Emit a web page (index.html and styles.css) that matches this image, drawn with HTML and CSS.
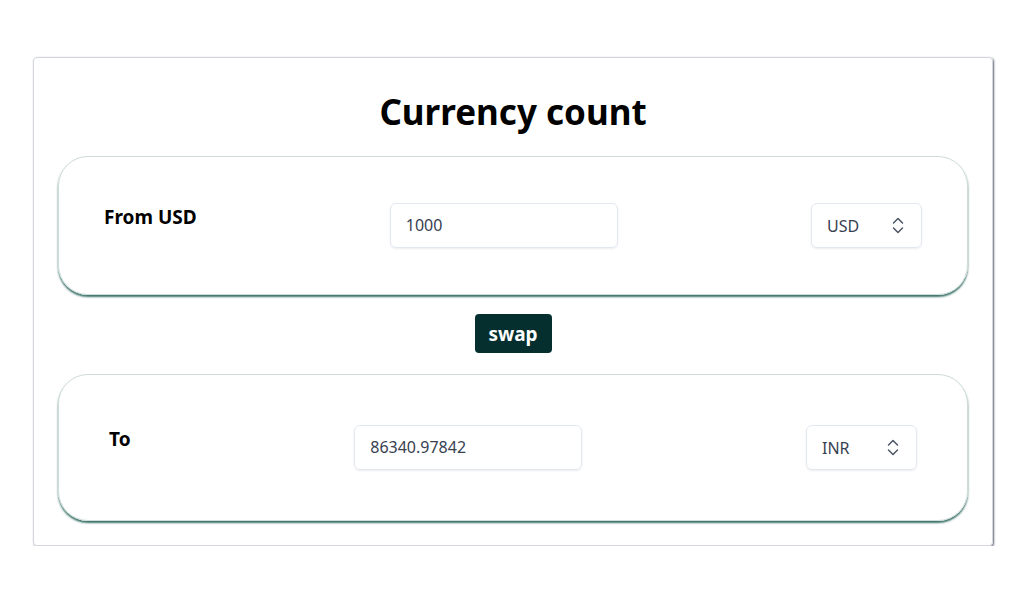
FILE: index.html
```html
<!DOCTYPE html>
<html>
<head>
<meta charset="utf-8">
<link rel="stylesheet" href="styles.css">
</head>
<body>
<div class="page">
  <div class="card">
    <h1 class="title">Currency count</h1>
    <div class="box box-from">
      <label class="label">From USD</label>
      <div class="input">1000</div>
      <div class="select">
        <span>USD</span>
        <svg class="chev" width="12" height="17" viewBox="0 0 12 17"><path d="M1.5 6 L6 1.5 L10.5 6 M1.5 11 L6 15.5 L10.5 11" fill="none" stroke="#4b5563" stroke-width="1.5" stroke-linecap="round" stroke-linejoin="round"/></svg>
      </div>
    </div>
    <div class="swap-row"><button class="swap">swap</button></div>
    <div class="box box-to">
      <label class="label">To</label>
      <div class="input">86340.97842</div>
      <div class="select">
        <span>INR</span>
        <svg class="chev" width="12" height="17" viewBox="0 0 12 17"><path d="M1.5 6 L6 1.5 L10.5 6 M1.5 11 L6 15.5 L10.5 11" fill="none" stroke="#4b5563" stroke-width="1.5" stroke-linecap="round" stroke-linejoin="round"/></svg>
      </div>
    </div>
  </div>
</div>
</body>
</html>
```
FILE: styles.css
```css
* { box-sizing: border-box; }
body {
  margin: 0;
  background: #fff;
  font-family: "Noto Sans", "Open Sans", sans-serif;
  color: #000;
}
.page {
  padding: 57px 0 0 33px;
}
.card {
  width: 960px;
  border: 1px solid #d3d6db;
  border-radius: 4px;
  box-shadow: 1px 1px 2px rgba(70, 80, 100, 0.85);
  padding: 24px;
}
.title {
  margin: 9px 0 24px;
  font-size: 35px;
  line-height: 41px;
  font-weight: 700;
  text-align: center;
}
.box {
  display: flex;
  justify-content: space-between;
  align-items: flex-start;
  border: 1px solid #cddcd9;
  border-radius: 30px;
  box-shadow: 0 2px 2px rgba(40, 100, 90, 0.9);
}
.box-from { padding: 46px 45px; }
.box-to { padding: 50px 50px; }
.label {
  font-size: 19px;
  line-height: 28px;
  font-weight: 700;
}
.input {
  width: 228px;
  flex: none;
  height: 45px;
  border: 1px solid #e3e8f0;
  border-radius: 6px;
  box-shadow: 0 1px 2px rgba(0, 0, 0, 0.08);
  padding: 0 15px;
  font-size: 16px;
  line-height: 43px;
  color: #374151;
}
.select {
  width: 111px;
  flex: none;
  height: 45px;
  border: 1px solid #e3e8f0;
  border-radius: 6px;
  box-shadow: 0 1px 2px rgba(0, 0, 0, 0.08);
  padding: 0 17px 0 15px;
  display: flex;
  align-items: center;
  justify-content: space-between;
  font-size: 16px;
  color: #374151;
}
.chev { display: block; }
.swap-row {
  display: flex;
  justify-content: center;
  margin: 19px 0 21px;
}
.swap {
  width: 77px;
  height: 39px;
  border: none;
  border-radius: 4px;
  background: #042f2e;
  color: #fff;
  font-family: inherit;
  font-size: 19px;
  font-weight: 700;
  padding: 0;
}
```
